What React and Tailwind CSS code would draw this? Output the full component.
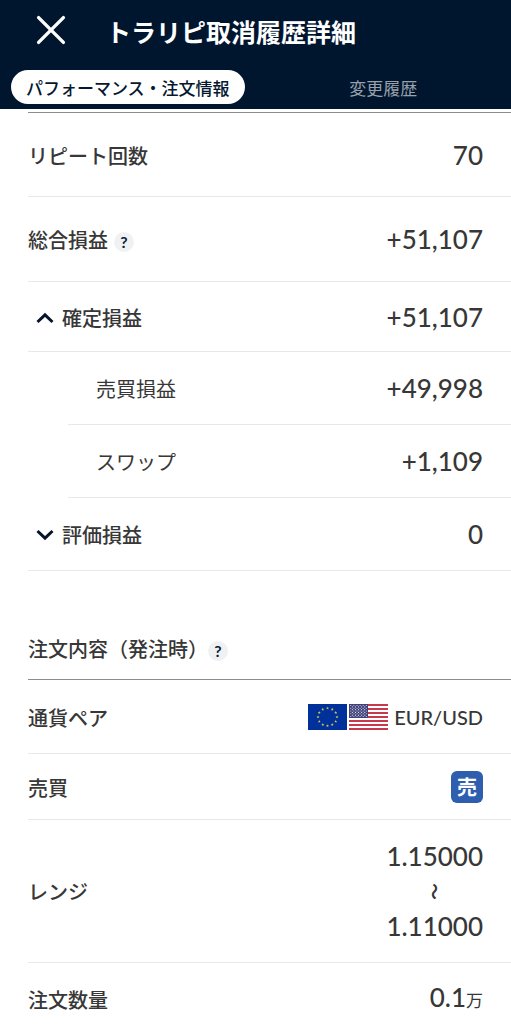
import React, { useState } from 'react';

const HelpButton = ({ label }) => (
  <button
    type="button"
    aria-label={label}
    className="mt-1 flex h-5 w-5 items-center justify-center rounded-full bg-[#f0f1f2] font-['Lato'] text-base leading-none font-bold text-[#0b1c38]"
  >
    ?
  </button>
);

const Chevron = ({ open }) => (
  <svg viewBox="0 0 18 12" className="h-3 w-[18px]" fill="none" stroke="#06152b" strokeWidth="3">
    <path d={open ? 'M1.5 10 9 2.8l7.5 7.2' : 'M1.5 2 9 9.2 16.5 2'} />
  </svg>
);

const Amount = ({ children }) => (
  <dd className="font-['Lato','Noto_Sans_CJK_JP',sans-serif] text-[26px] leading-8 font-medium">{children}</dd>
);

const Label = ({ className = '', children }) => <dt className={`pt-0.5 ${className}`}>{children}</dt>;

const Row = ({ className = '', children }) => (
  <div className={`flex items-center justify-between border-b border-[#e8e8ea] pr-7 ${className}`}>{children}</div>
);

// 12 stars of the EU flag sit on a circle round the centre
const euStars = Array.from({ length: 12 }, (_, i) => {
  const a = (i * Math.PI) / 6;
  return [19.5 + 9.5 * Math.sin(a), 13 - 8.8 * Math.cos(a)];
});

const starPath = (cx, cy, r) => {
  const pts = Array.from({ length: 10 }, (_, i) => {
    const rad = i % 2 ? r * 0.4 : r;
    const a = (i * Math.PI) / 5;
    return `${(cx + rad * Math.sin(a)).toFixed(2)} ${(cy - rad * Math.cos(a)).toFixed(2)}`;
  });
  return `M${pts.join('L')}Z`;
};

const EuFlag = () => (
  <svg viewBox="0 0 39 26" className="h-[26px] w-[39px]" aria-hidden="true">
    <rect width="39" height="26" fill="#00309a" />
    {euStars.map(([x, y], i) => (
      <path key={i} d={starPath(x, y, 1.6)} fill="#d8ca4a" />
    ))}
  </svg>
);

const UsFlag = () => (
  <svg viewBox="0 0 39 26" className="h-[26px] w-[39px]" aria-hidden="true">
    <rect width="39" height="26" fill="#fff" />
    {[0, 1, 2, 3, 4, 5, 6].map((i) => (
      <rect key={i} y={i * 4} width="39" height="2" fill="#c8384c" />
    ))}
    <rect width="19" height="14" fill="#40417a" />
    {Array.from({ length: 9 }, (_, r) =>
      Array.from({ length: r % 2 ? 5 : 6 }, (_, c) => (
        <circle key={`${r}-${c}`} cx={1.8 + c * 3.1 + (r % 2 ? 1.55 : 0)} cy={1.5 + r * 1.38} r="0.55" fill="#e6e6f0" />
      ))
    )}
  </svg>
);

const TABS = [
  { id: 'performance', label: 'パフォーマンス・注文情報' },
  { id: 'history', label: '変更履歴' },
];

const App = () => {
  const [tab, setTab] = useState('performance');
  const [showRealized, setShowRealized] = useState(true);
  const [showUnrealized, setShowUnrealized] = useState(false);

  return (
    <div className="min-h-screen overflow-hidden bg-white font-['Noto_Sans_CJK_JP',sans-serif] text-[#373737]">
      <header className="bg-[#00162e] pb-[5px] text-white">
        <div className="flex h-[70px] items-start gap-10 pt-3 pl-9">
          <button type="button" aria-label="閉じる" className="flex h-9 w-[30px] items-center justify-center">
            <svg viewBox="0 0 30 30" className="h-[30px] w-[30px]" stroke="currentColor" strokeWidth="3.4" strokeLinecap="round">
              <path d="M2.6 2.6 27.4 27.4M27.4 2.6 2.6 27.4" />
            </svg>
          </button>
          <h1 className="pt-px text-[25px] leading-9 font-bold">トラリピ取消履歴詳細</h1>
        </div>

        <div role="tablist" className="grid grid-cols-2">
          {TABS.map((t) => (
            <button
              key={t.id}
              type="button"
              role="tab"
              aria-selected={tab === t.id}
              onClick={() => setTab(t.id)}
              className={`mx-[11px] h-[34px] rounded-full text-[17px] leading-none whitespace-nowrap ${
                tab === t.id ? 'bg-white font-medium text-[#06182f]' : 'text-[#98a1ab]'
              }`}
            >
              {t.label}
            </button>
          ))}
        </div>
      </header>

      <main className="pt-[3px] pl-7 text-xl leading-8 font-medium">
        {/* --- PERFORMANCE --- */}
        <dl className="border-t border-[#8c8c8c]">
          <Row className="h-[84px]">
            <Label>リピート回数</Label>
            <Amount>70</Amount>
          </Row>
          <Row className="h-[85px]">
            <Label className="flex items-center gap-1.5">
              総合損益
              <HelpButton label="総合損益の説明" />
            </Label>
            <Amount>+51,107</Amount>
          </Row>
          <Row className="h-[70px]">
            <Label>
              <button
                type="button"
                aria-expanded={showRealized}
                onClick={() => setShowRealized(!showRealized)}
                className="flex items-center gap-2 pl-2"
              >
                <Chevron open={showRealized} />
                確定損益
              </button>
            </Label>
            <Amount>+51,107</Amount>
          </Row>
          {showRealized && (
            <>
              <Row className="ml-10 h-[73px] pl-7">
                <Label className="font-normal">売買損益</Label>
                <Amount>+49,998</Amount>
              </Row>
              <Row className="ml-10 h-[73px] pl-7">
                <Label className="font-normal">スワップ</Label>
                <Amount>+1,109</Amount>
              </Row>
            </>
          )}
          <Row className="h-[73px]">
            <Label>
              <button
                type="button"
                aria-expanded={showUnrealized}
                onClick={() => setShowUnrealized(!showUnrealized)}
                className="flex items-center gap-2 pl-2"
              >
                <Chevron open={showUnrealized} />
                評価損益
              </button>
            </Label>
            <Amount>0</Amount>
          </Row>
        </dl>

        {/* --- ORDER --- */}
        <div className="flex items-center pt-[62px] pb-[14px]">
          <h2>注文内容（発注時）</h2>
          <HelpButton label="注文内容の説明" />
        </div>
        <dl className="border-t border-[#8c8c8c]">
          <Row className="h-[74px]">
            <Label>通貨ペア</Label>
            <dd className="flex items-center gap-0.5 font-['Lato',sans-serif]">
              <EuFlag />
              <UsFlag />
              <span className="pl-1">EUR/USD</span>
            </dd>
          </Row>
          <Row className="h-[66px]">
            <Label>売買</Label>
            <dd className="flex h-8 w-8 items-center justify-center rounded-md bg-[#2d5fae] font-bold text-white">売</dd>
          </Row>
          <Row className="h-[143px]">
            <Label>レンジ</Label>
            <dd className="flex flex-col items-center font-['Lato',sans-serif] text-[26px] font-medium">
              <span>1.15000</span>
              <span className="h-[38px] text-center font-['Noto_Sans_CJK_JP',sans-serif] text-[17px] leading-5 font-bold [text-orientation:sideways] [writing-mode:vertical-rl]">
                〜
              </span>
              <span>1.11000</span>
            </dd>
          </Row>
          <Row className="h-[73px]">
            <Label>注文数量</Label>
            <Amount>
              0.1<span className="text-[17px] font-normal">万</span>
            </Amount>
          </Row>
        </dl>
      </main>
    </div>
  );
};

export default App;
